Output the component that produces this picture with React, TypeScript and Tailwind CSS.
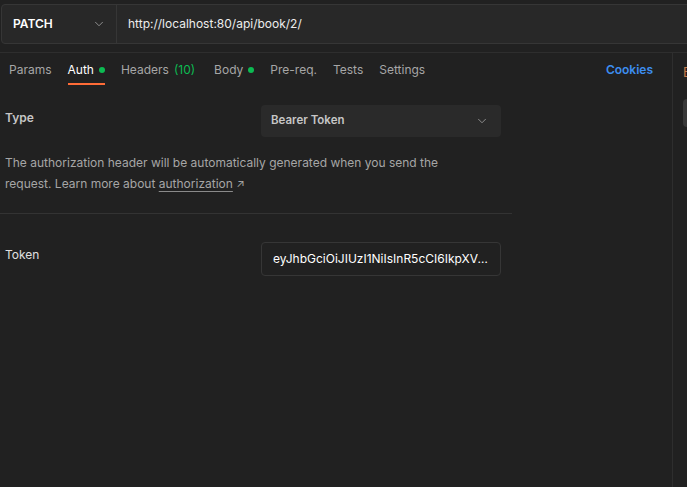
import React from 'react';
import { ChevronDown } from 'lucide-react';

const tabs = [
  { label: 'Params' },
  { label: 'Auth', dot: true, active: true },
  { label: 'Headers', count: '(10)' },
  { label: 'Body', dot: true },
  { label: 'Pre-req.' },
  { label: 'Tests' },
  { label: 'Settings' },
];

export default function App() {
  return (
    <div
      className="w-[687px] h-[487px] overflow-hidden bg-[#212121] text-[12px] flex flex-col"
      style={{ fontFamily: 'Inter, "Noto Sans", sans-serif' }}
    >
      {/* request bar */}
      <div className="h-[53px] shrink-0 pt-[4px] pl-[1px] border-b border-[#2e2e2e]">
        <div className="flex h-[40px] w-[700px] rounded-[4px] border border-[#363636] bg-[#282828]">
          <div className="flex w-[115px] items-center justify-between pl-[11px] pr-[10px] border-r border-[#363636]">
            <span className="font-semibold text-white">PATCH</span>
            <ChevronDown className="h-[14px] w-[14px] text-[#9a9a9a]" strokeWidth={1.5} />
          </div>
          <div className="flex items-center pl-[11px] text-[#ededed]">http://localhost:80/api/book/2/</div>
        </div>
      </div>

      <div className="flex flex-1 min-h-0">
        {/* main */}
        <div className="w-[673px] shrink-0 border-r border-[#2e2e2e]">
          <div className="flex h-[35px] items-center justify-between pr-[19px] pb-[2px]">
            <div className="flex h-full items-stretch">
              {tabs.map((t) => (
                <div
                  key={t.label}
                  className={`relative flex items-center gap-[5px] px-[8px] first:pl-[9px] ${
                    t.count ? 'pr-[11px]' : ''
                  } ${t.active ? 'text-white' : 'text-[#a6a6a6]'}`}
                >
                  <span>{t.label}</span>
                  {t.count && <span className="text-[#0cbb52]">{t.count}</span>}
                  {t.dot && <span className="h-[6px] w-[6px] rounded-full bg-[#0cbb52]" />}
                  {t.active && (
                    <span className="absolute left-[8px] right-[8px] bottom-[1px] h-[2px] bg-[#ff6c37]" />
                  )}
                </div>
              ))}
            </div>
            <span className="font-semibold text-[#3d8ef0]">Cookies</span>
          </div>

          <div className="w-[512px]">
            <div className="grid grid-cols-[256px_240px] pl-[5px] pt-[17px]">
              <div className="pt-[4px] font-semibold text-[#c6c6c6]">Type</div>
              <div className="flex h-[32px] items-center justify-between rounded-[4px] bg-[#2a2a2a] pl-[10px] pr-[12px]">
                <span className="font-semibold text-[11.5px] text-[#c6c6c6]">Bearer Token</span>
                <ChevronDown className="h-[14px] w-[14px] text-[#9a9a9a]" strokeWidth={1.5} />
              </div>
            </div>
            <p className="w-[460px] pl-[5px] pt-[15px] leading-[21px] text-[#a6a6a6]">
              The authorization header will be automatically generated when you send the request. Learn more
              about <span className="underline underline-offset-[3px] decoration-[#8a8a8a]">authorization</span>{' '}
              <span className="text-[11px]">↗</span>
            </p>
            <div className="mt-[18px] h-px bg-[#333333]" />
            <div className="grid grid-cols-[256px_240px] pl-[5px] pt-[28px]">
              <div className="pt-[4px] text-[#e0e0e0]">Token</div>
              <div className="flex h-[34px] items-center overflow-hidden rounded-[4px] border border-[#363636] pl-[11px] pr-[10px]">
                <span className="truncate text-white">
                  eyJhbGciOiJIUzI1NiIsInR5cCI6IkpXVCJ9.eyJzdWIiOiIxMjM0NTY3ODkwIn0
                </span>
              </div>
            </div>
          </div>
        </div>

        {/* side panel */}
        <div className="flex-1 pl-[10px] pt-[10px]">
          <div className="text-[13px] text-[#c47a4a]">E</div>
          <div className="mt-[16px] h-[28px] w-[20px] rounded-[4px] bg-[#383838]" />
        </div>
      </div>
    </div>
  );
}
